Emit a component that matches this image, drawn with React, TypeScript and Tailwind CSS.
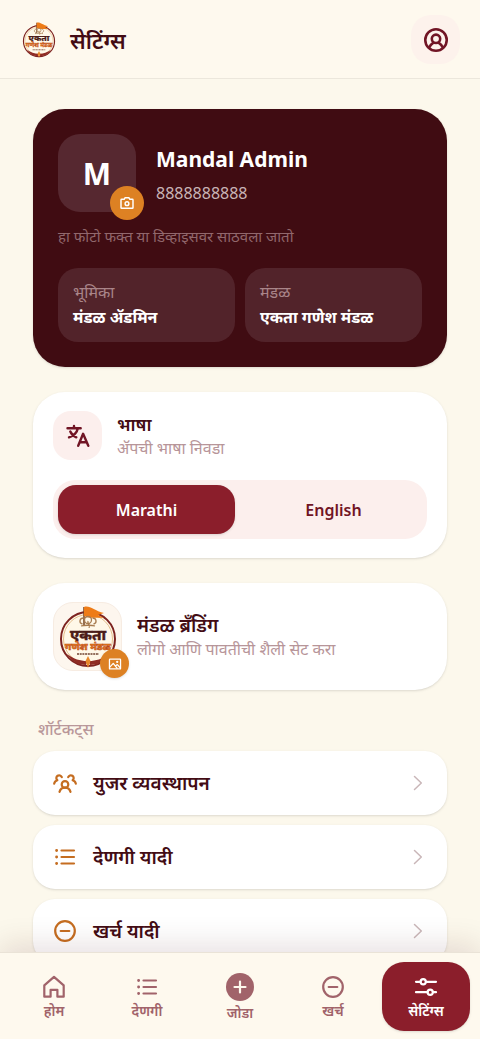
import type { ReactNode } from "react";

type IconProps = { className?: string; children?: ReactNode };

function Icon({ className = "size-6", children }: IconProps) {
  return (
    <svg
      viewBox="0 0 24 24"
      fill="none"
      stroke="currentColor"
      strokeWidth="2.200"
      strokeLinecap="round"
      strokeLinejoin="round"
      className={className}
      aria-hidden="true"
    >
      {children}
    </svg>
  );
}

function UserIcon() {
  return (
    <Icon className="size-7">
      <circle cx="12" cy="12" r="9.2" />
      <circle cx="12" cy="11" r="3.600" />
      <path d="M6.300 18.200c.8-1.700 1.900-2.800 3.300-3.700M17.700 18.200c-.8-1.700-1.900-2.800-3.300-3.700" />
    </Icon>
  );
}

function CameraIcon() {
  return (
    <Icon className="size-4">
      <path d="M4 6.500h3.700L9.200 4h5.600l1.500 2.500H20a1 1 0 0 1 1 1V19a1 1 0 0 1-1 1H4a1 1 0 0 1-1-1V7.500a1 1 0 0 1 1-1Z" />
      <circle cx="12" cy="13" r="2.800" />
    </Icon>
  );
}

function TranslateIcon() {
  return (
    <svg viewBox="0 0 24 24" fill="none" stroke="currentColor" strokeWidth="2.400" strokeLinecap="round" strokeLinejoin="round" className="size-6" aria-hidden="true">
      <path d="M1.500 4.300h13.200M8 2v2.300M4.300 7.500c1.200 2.900 3.500 4.800 6 5.800M11.800 4.500c-.8 4-3.700 7-8.800 8.800" />
      <path d="m12.200 21.800 4.900-12 5.200 12M14 18.300h6.600" />
    </svg>
  );
}

function ImageIcon() {
  return (
    <Icon className="size-[14px]">
      <rect x="2.500" y="3.500" width="19" height="17" rx="1" />
      <path d="m3.500 17 5.500-6 6.500 8M13 15.500l3-2.500 4.500 5" />
      <circle cx="15.800" cy="8.300" r=".9" />
    </Icon>
  );
}

function UsersIcon() {
  return (
    <Icon className="size-6">
      <circle cx="12" cy="13.400" r="3.300" />
      <path d="M6.500 20.900c.7-2.500 2.700-4.200 5.500-4.200s4.800 1.700 5.500 4.200" />
      <path d="M8.800 6.200A2.800 2.800 0 1 0 4.300 9.200C2.600 9.700 1.500 10.900 1.200 12.600M15.200 6.200a2.800 2.800 0 1 1 4.500 3c1.700.5 2.800 1.700 3.100 3.400" />
    </Icon>
  );
}

function ListIcon() {
  return (
    <Icon className="size-6">
      <path d="M8.500 5.500h12.500M8.500 12h12.500M8.500 18.500h12.500" />
      <path d="M3.600 5.500h.01M3.600 12h.01M3.600 18.500h.01" strokeWidth="2.900" />
    </Icon>
  );
}

function MinusIcon() {
  return (
    <Icon className="size-6">
      <circle cx="12" cy="12" r="9.800" />
      <path d="M7.700 12h8.600" />
    </Icon>
  );
}

function HomeIcon() {
  return (
    <Icon className="size-6">
      <path d="M2.300 21.700V10.400L12 1.900l9.700 8.500v11.300h-6.300v-6.900H8.600v6.900Z" />
    </Icon>
  );
}

function AddIcon() {
  return (
    <svg viewBox="0 0 28 28" className="size-7" aria-hidden="true">
      <circle cx="14" cy="14" r="14" fill="currentColor" />
      <path d="M14 8.500v11M8.500 14h11" stroke="#fef9ee" strokeWidth="2.200" strokeLinecap="round" />
    </svg>
  );
}

function SlidersIcon() {
  return (
    <Icon className="size-6">
      <path d="M2 6.800h4.500M12 6.800h10M2 17.200h11.500M19 17.200h3" />
      <circle cx="9.200" cy="6.800" r="2.600" />
      <circle cx="16.200" cy="17.200" r="2.600" />
    </Icon>
  );
}

function Chevron() {
  return (
    <svg viewBox="0 0 16 16" className="size-4 text-[#c9b6b8]" fill="none" stroke="currentColor" strokeWidth="1.500" strokeLinecap="round" strokeLinejoin="round" aria-hidden="true">
      <path d="m3.500 1.500 6.800 6.500-6.800 6.500" />
    </svg>
  );
}

function Logo({ className }: { className: string }) {
  return (
    <svg viewBox="0 0 66 66" className={className} role="img" aria-label="एकता गणेश मंडळ">
      <circle cx="33" cy="35" r="27" fill="#fff8e8" stroke="#7d2320" strokeWidth="2" />
      <circle cx="33" cy="35" r="24.500" fill="none" stroke="#d9a566" strokeWidth=".7" />
      <path d="M12 50c5 8 11 11 19 11l1-4c-7 0-13-2-20-7ZM54 50c-5 8-11 11-19 11l-1-4c7 0 13-2 20-7Z" fill="#8f2b24" />
      <path d="m33 52 2.500 5-2.500 7-2.500-7Z" fill="#e8882a" />
      <path d="M29 3v18" stroke="#71401f" strokeWidth="1.500" />
      <path d="M29 3c6-2 10 4 20 6l-6 2 6 3c-8-1-13 1-20-2Z" fill="#ee7c17" />
      <g fill="none" stroke="#a87b4e" strokeWidth="1.300">
        <circle cx="33" cy="16" r="3.500" />
        <path d="M28.500 14c-4 0-5 5-1 6M37.500 14c4 0 5 5 1 6M33 17c-1 3 3 4 1 7M26 22c3-1 11-1 14 0" />
      </g>
      <path d="M14 24h38v23H14Z" fill="#fff8e8" />
      <text x="33" y="35.500" textAnchor="middle" fontSize="15" fontWeight="800" fill="#4b1c18" stroke="#4b1c18" strokeWidth=".4">एकता</text>
      <text x="33" y="46" textAnchor="middle" fontSize="10" fontWeight="800" fill="#e67b1c" stroke="#b8481b" strokeWidth=".5">गणेश मंडळ</text>
      <path d="M22 50h22" stroke="#70412f" strokeWidth="1.400" strokeDasharray="2 .7" />
    </svg>
  );
}

const shortcuts = [
  { label: "युजर व्यवस्थापन", icon: <UsersIcon /> },
  { label: "देणगी यादी", icon: <ListIcon /> },
  { label: "खर्च यादी", icon: <MinusIcon /> },
];

const tabs = [
  { label: "होम", icon: <HomeIcon /> },
  { label: "देणगी", icon: <ListIcon /> },
  { label: "जोडा", icon: <AddIcon /> },
  { label: "खर्च", icon: <MinusIcon /> },
  { label: "सेटिंग्स", icon: <SlidersIcon />, active: true },
];

function InfoTile({ title, value }: { title: string; value: string }) {
  return (
    <div className="rounded-[20px] bg-[#52232a] px-[15px] py-3">
      <dt className="text-base leading-6 text-[#a98589]">{title}</dt>
      <dd className="text-base leading-[26px] font-bold text-white">{value}</dd>
    </div>
  );
}

export default function App() {
  return (
    <div className="flex h-screen flex-col bg-[#fcf8ec] font-['Noto_Sans','Noto_Sans_Devanagari',sans-serif] text-[#430c14]">
      <header className="flex shrink-0 items-center gap-3 border-b border-[#ece7dc] bg-[#fef9ee] px-5 pt-[15px] pb-[14px]">
        <Logo className="size-[38px]" />
        <h1 className="flex-1 text-[22px] leading-7 font-semibold">सेटिंग्स</h1>
        <button type="button" aria-label="प्रोफाइल" className="grid size-[49px] place-items-center rounded-[20px] bg-[#fdf2ec] text-[#711525]">
          <UserIcon />
        </button>
      </header>

      <main className="min-h-0 flex-1 overflow-y-auto px-[33px] pt-[30px] pb-8 [scrollbar-width:none]">
        <section className="rounded-[32px] bg-[#400c12] p-[25px] shadow-sm">
          <div className="flex items-end gap-5">
            <div className="relative grid size-[78px] shrink-0 place-items-center rounded-[22px] bg-[#562830] text-[30px] font-bold text-white">
              M
              <button type="button" aria-label="फोटो बदला" className="absolute -right-2 -bottom-2 grid size-[34px] place-items-center rounded-full bg-[#dd8123]">
                <CameraIcon />
              </button>
            </div>
            <div className="pb-0.5">
              <h2 className="text-[21px] leading-[34px] font-bold text-white">Mandal Admin</h2>
              <p className="text-base leading-[34px] text-[#c9b4b6]">8888888888</p>
            </div>
          </div>
          <p className="mt-3 text-[15px] leading-6 text-[#91676c]">हा फोटो फक्त या डिव्हाइसवर साठवला जातो</p>
          <dl className="mt-5 grid grid-cols-2 gap-[10px]">
            <InfoTile title="भूमिका" value="मंडळ ॲडमिन" />
            <InfoTile title="मंडळ" value="एकता गणेश मंडळ" />
          </dl>
        </section>

        <section className="mt-[25px] rounded-[32px] bg-white px-5 py-[19px] shadow-sm">
          <div className="flex items-center gap-[15px]">
            <div className="grid size-[49px] place-items-center rounded-[18px] bg-[#fcefed] text-[#711525]">
              <TranslateIcon />
            </div>
            <div>
              <h2 className="text-lg leading-6 font-semibold">भाषा</h2>
              <p className="text-base leading-6 text-[#b79599]">ॲपची भाषा निवडा</p>
            </div>
          </div>
          <div className="mt-5 grid grid-cols-2 gap-[10px] rounded-[22px] bg-[#fcefed] p-[5px] text-base font-semibold">
            <button type="button" aria-pressed="true" className="h-[49px] rounded-[18px] bg-[#8b1e2b] text-white shadow-sm">Marathi</button>
            <button type="button" aria-pressed="false" className="h-[49px] rounded-[18px] text-[#711525]">English</button>
          </div>
        </section>

        <section className="mt-[25px] flex items-center gap-[15px] rounded-[32px] bg-white px-5 py-[19px] shadow-sm">
          <div className="relative grid size-[69px] place-items-center rounded-[20px] border border-[#f7ece2] bg-[#fdf6ee]">
            <Logo className="size-[66px]" />
            <button type="button" aria-label="लोगो बदला" className="absolute -right-2 -bottom-2 grid size-[29px] place-items-center rounded-full bg-[#dd8123] text-white shadow-sm">
              <ImageIcon />
            </button>
          </div>
          <div>
            <h2 className="text-[19px] leading-6 font-semibold">मंडळ ब्रँडिंग</h2>
            <p className="text-base leading-6 text-[#b79599]">लोगो आणि पावतीची शैली सेट करा</p>
          </div>
        </section>

        <h2 className="mt-[27px] px-[5px] text-base leading-6 font-medium text-[#b9979a]">शॉर्टकट्स</h2>
        <nav aria-label="शॉर्टकट्स" className="mt-[10px] flex flex-col gap-[10px]">
          {shortcuts.map((item) => (
            <a key={item.label} href="#" className="flex h-16 shrink-0 items-center gap-4 rounded-[22px] bg-white px-5 shadow-sm">
              <span className="text-[#c56d20]">{item.icon}</span>
              <span className="flex-1 text-[19px] leading-7 font-semibold">{item.label}</span>
              <Chevron />
            </a>
          ))}
        </nav>
      </main>

      <nav aria-label="मुख्य" className="relative grid shrink-0 grid-cols-5 gap-[5px] border-t border-[#eae3d7] bg-[#fef9ee] px-[10px] pt-[9px] pb-2 shadow-[0_-8px_30px_rgba(64,12,18,0.12)]">
        {tabs.map((tab) => (
          <a
            key={tab.label}
            href="#"
            aria-current={tab.active ? "page" : undefined}
            className={
              tab.active
                ? "flex h-[69px] flex-col items-center justify-center rounded-[22px] bg-[#8b1e2b] pt-1 text-white shadow-sm"
                : "flex h-[69px] flex-col items-center justify-center rounded-[22px] pt-1 text-[#a1636a]"
            }
          >
            {tab.icon}
            <span className="text-sm leading-6 font-semibold">{tab.label}</span>
          </a>
        ))}
      </nav>
    </div>
  );
}
